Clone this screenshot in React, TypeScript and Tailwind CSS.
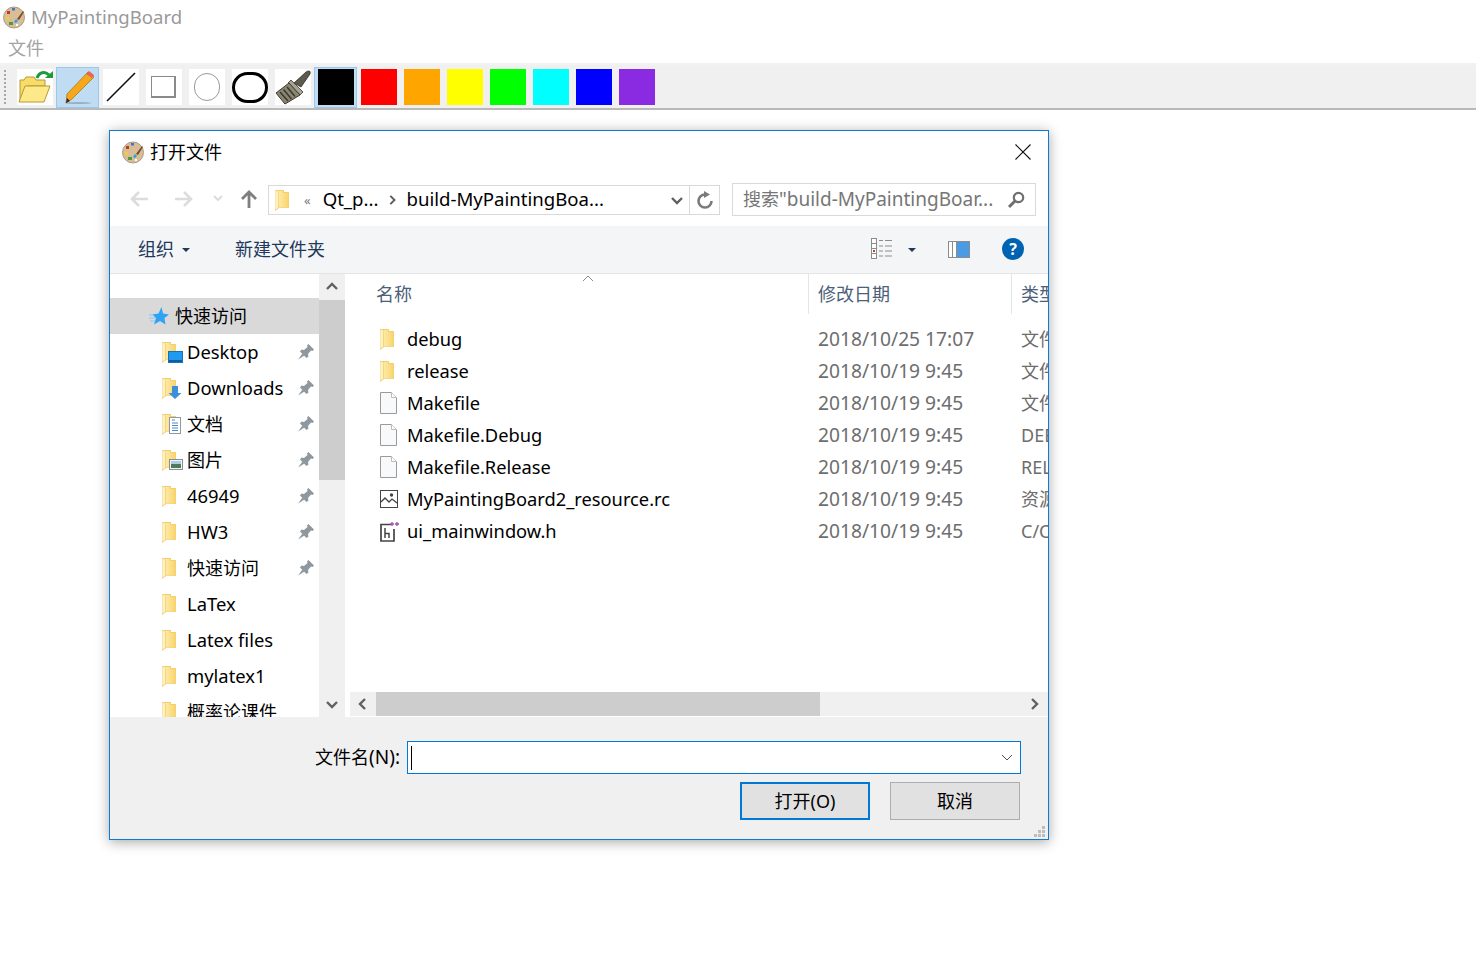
import React from 'react';

const sideItems = [
  { name: 'Desktop', badge: 'desktop', pin: true },
  { name: 'Downloads', badge: 'download', pin: true },
  { name: '文档', badge: 'doc', pin: true },
  { name: '图片', badge: 'pic', pin: true },
  { name: '46949', pin: true },
  { name: 'HW3', pin: true },
  { name: '快速访问', pin: true },
  { name: 'LaTex' },
  { name: 'Latex files' },
  { name: 'mylatex1' },
  { name: '概率论课件' },
];

const files = [
  { name: 'debug', date: '2018/10/25 17:07', type: '文件夹', icon: 'folder' },
  { name: 'release', date: '2018/10/19 9:45', type: '文件夹', icon: 'folder' },
  { name: 'Makefile', date: '2018/10/19 9:45', type: '文件', icon: 'file' },
  { name: 'Makefile.Debug', date: '2018/10/19 9:45', type: 'DEBUG', icon: 'file' },
  { name: 'Makefile.Release', date: '2018/10/19 9:45', type: 'RELEASE', icon: 'file' },
  { name: 'MyPaintingBoard2_resource.rc', date: '2018/10/19 9:45', type: '资源脚本', icon: 'image' },
  { name: 'ui_mainwindow.h', date: '2018/10/19 9:45', type: 'C/C++', icon: 'header' },
];

const colors = ['bg-[#ff0000]', 'bg-[#ffa500]', 'bg-[#ffff00]', 'bg-[#00ff00]', 'bg-[#00ffff]', 'bg-[#0000ff]', 'bg-[#8a2be2]'];

const hasCjk = (s: string) => /[\u4e00-\u9fff]/.test(s);

const Palette = () => (
  <svg width="22" height="24" viewBox="0 0 22 24" className="shrink-0">
    <ellipse cx="11" cy="12.5" rx="10.5" ry="10.5" fill="#d9bd96" stroke="#a89a88" strokeWidth="1" />
    <rect x="4" y="6" width="3" height="3" fill="#c0392b" />
    <rect x="9" y="3" width="3" height="2.5" fill="#4a6fd0" />
    <rect x="3" y="12" width="3" height="3" fill="#e6d33a" />
    <rect x="6" y="17" width="4" height="3" fill="#4f9a3c" />
    <path d="M11 17 L13 14 L15 16 L13 18 Z" fill="#2a9df4" />
    <path d="M14 14 L20 6 L21 7 L16 15 Z" fill="#7a4a2a" />
    <circle cx="14" cy="20" r="1.2" fill="#fff" />
  </svg>
);

const Folder = () => (
  <svg width="15" height="21" viewBox="0 0 15 21" className="shrink-0">
    <defs>
      <linearGradient id="folderBody" x1="0" y1="0" x2="1" y2="0">
        <stop offset="0" stopColor="#fff0b5" />
        <stop offset="1" stopColor="#f8d46f" />
      </linearGradient>
    </defs>
    <path d="M0 0 H9 V2 H14 V18 H4 L0 21 Z" fill="#f4cf72" />
    <path d="M1 1 H8 V3 H13.5 V17.5 H4 V3 L1 6 Z" fill="url(#folderBody)" />
    <path d="M0 0.5 V20 L3.5 18 V1 Z" fill="#fff1bd" stroke="#eccb75" strokeWidth="0.5" />
  </svg>
);

const Badge = ({ kind }: { kind?: string }) => {
  if (kind === 'desktop')
    return (
      <svg width="15" height="12" viewBox="0 0 15 12" className="absolute left-[6px] top-[9px]">
        <rect x="0.5" y="0.5" width="14" height="11" fill="#1e9bf0" stroke="#1a6fb5" />
        <rect x="1" y="9" width="13" height="2" fill="#0f5d9e" />
      </svg>
    );
  if (kind === 'download')
    return (
      <svg width="14" height="14" viewBox="0 0 14 14" className="absolute left-[6px] top-[8px]">
        <path d="M4 0 H10 V7 H13.5 L7 13 L0.5 7 H4 Z" fill="#3d8fdc" />
      </svg>
    );
  if (kind === 'doc')
    return (
      <svg width="12" height="17" viewBox="0 0 12 17" className="absolute left-[7px] top-[3px]">
        <rect x="0.5" y="0.5" width="11" height="16" fill="#fff" stroke="#8d99a6" />
        <path d="M3 3 H6 M3 6 H9 M3 8.5 H9 M3 11 H9 M3 13.5 H9" stroke="#4a86c8" strokeWidth="1" />
      </svg>
    );
  if (kind === 'pic')
    return (
      <svg width="14" height="11" viewBox="0 0 14 11" className="absolute left-[7px] top-[9px]">
        <rect x="0.5" y="0.5" width="13" height="10" fill="#f4f4f4" stroke="#8a8f94" />
        <rect x="2" y="2" width="10" height="3" fill="#a9cfe6" />
        <rect x="2" y="5" width="10" height="4" fill="#4e7a5c" />
      </svg>
    );
  return null;
};

const Pin = () => (
  <svg width="16" height="16" viewBox="0 0 16 16" className="shrink-0">
    <path d="M10.5 0 L16 5.5 L14.5 7 L13 6.5 L10 10 L10.5 12.5 L8.5 14 L2 7.5 L3.5 5.5 L6 6 L9.5 3 L9 1.5 Z" fill="#8f989f" />
    <path d="M4.5 9.5 L0 15.5 L6.5 11.5 Z" fill="#8f989f" />
  </svg>
);

const FileIcon = ({ kind }: { kind: string }) => {
  if (kind === 'folder') return <Folder />;
  if (kind === 'file')
    return (
      <svg width="17" height="22" viewBox="0 0 17 22" className="shrink-0">
        <path d="M0.5 0.5 H11.5 L16.5 5.5 V21.5 H0.5 Z" fill="#f8f9fa" stroke="#9a9a9a" />
        <path d="M11.5 0.5 V5.5 H16.5" fill="#fff" stroke="#bdbdbd" />
      </svg>
    );
  if (kind === 'image')
    return (
      <svg width="18" height="18" viewBox="0 0 18 18" className="shrink-0">
        <rect x="0.5" y="0.5" width="17" height="17" fill="#fff" stroke="#444" />
        <path d="M1 12 L5 8 L9 12 L12 9 L17 13" fill="none" stroke="#444" strokeWidth="1.3" />
        <circle cx="11.5" cy="5" r="1.7" fill="#444" />
      </svg>
    );
  return (
    <svg width="19" height="21" viewBox="0 0 19 21" className="shrink-0">
      <path d="M11 3.5 H1 V20 H14 V8" fill="#fff" stroke="#444" strokeWidth="1.7" />
      <path d="M5 7 V17 M5 12.5 H9 V17" fill="none" stroke="#444" strokeWidth="1.5" />
      <path d="M10 3 H14 M12 1 V5 M15 3 H19 M17 1 V5" stroke="#a24fa8" strokeWidth="1.3" />
    </svg>
  );
};

const Chevron = ({ dir, className }: { dir: 'up' | 'down' | 'left' | 'right'; className?: string }) => {
  const d = { up: 'M1 8 L6 3 L11 8', down: 'M1 4 L6 9 L11 4', left: 'M8 1 L3 6 L8 11', right: 'M4 1 L9 6 L4 11' }[dir];
  return (
    <svg width="12" height="12" viewBox="0 0 12 12" className={className}>
      <path d={d} fill="none" stroke="#606060" strokeWidth="2.4" />
    </svg>
  );
};

const ToolButton = ({ active, children }: { active?: boolean; children: React.ReactNode }) => (
  <div
    className={
      active
        ? 'w-[43px] h-[41px] flex items-center justify-center bg-[#bfdcf3] border border-[#99c9ef]'
        : 'w-[43px] h-[41px] flex items-center justify-center'
    }
  >
    <div className="w-[36px] h-[36px] flex items-center justify-center">{children}</div>
  </div>
);

const App: React.FC = () => {
  return (
    <div className="relative w-full h-screen overflow-hidden bg-white font-['Noto_Sans','Noto_Sans_CJK_SC',sans-serif]">
      {/* Main window */}
      <div className="h-[34px] flex items-center pl-[3px] gap-[6px]">
        <Palette />
        <span className="text-[18.6px] text-[#9a9a9a]">MyPaintingBoard</span>
      </div>
      <div className="h-[31px] flex items-center pl-[8px] text-[18px] text-[#a3a3a3] border-b-2 border-[#f2f2f2]">文件</div>
      <div className="h-[45px] flex items-center bg-[#f0f0f0] border-b-2 border-[#b9b9b9] pl-[4px] pt-px">
        <div className="w-[3px] h-[34px] mr-[6px] border-l-2 border-dotted border-[#a8a8a8]" />
        <ToolButton>
          <div className="w-[36px] h-[36px] bg-white">
            <svg width="36" height="36" viewBox="0 0 36 36">
              <path d="M3 31 V11 H7 L9 8 H17 L19 11 H28 V17 H10 Z" fill="#f7dc6a" stroke="#b79a35" />
              <path d="M2 33 L8 17 H33 L27 33 Z" fill="#fde98a" stroke="#b79a35" />
              <path d="M20 9 C22 3 28 2 32 6" fill="none" stroke="#1f9a3a" strokeWidth="3" />
              <path d="M28 9 H36 V2 Z" fill="#1f9a3a" />
            </svg>
          </div>
        </ToolButton>
        <ToolButton active>
          <svg width="36" height="36" viewBox="0 0 36 36">
            <ellipse cx="18" cy="34" rx="13" ry="1" fill="#9cb0c0" />
            <path d="M28 3 L34 8 L12 30 L6 34 L7 25 Z" fill="#f6a81c" stroke="#a86c0b" strokeWidth="0.7" />
            <path d="M29 2 L34 6 L32 9 L26 5 Z" fill="#e2655a" />
            <path d="M7 29 L10 32 L6 34 Z" fill="#2b2b2b" />
          </svg>
        </ToolButton>
        <ToolButton>
          <div className="w-[36px] h-[36px] bg-white">
            <svg width="36" height="36" viewBox="0 0 36 36">
              <path d="M4 32 L32 4" stroke="#111" strokeWidth="1.6" />
            </svg>
          </div>
        </ToolButton>
        <ToolButton>
          <div className="w-[36px] h-[36px] bg-white flex items-center justify-center">
            <div className="w-[25px] h-[22px] border border-[#8a8a8a] border-b-2 border-r-2" />
          </div>
        </ToolButton>
        <ToolButton>
          <div className="w-[36px] h-[36px] bg-white flex items-center justify-center">
            <div className="w-[26px] h-[28px] rounded-full border border-[#9a9a9a]" />
          </div>
        </ToolButton>
        <ToolButton>
          <div className="w-[36px] h-[36px] bg-white flex items-center justify-center">
            <div className="w-[36px] h-[31px] rounded-full border-[3px] border-black" />
          </div>
        </ToolButton>
        <ToolButton>
          <div className="w-[36px] h-[36px] bg-white">
            <svg width="36" height="36" viewBox="0 0 36 36">
              <path d="M19 14 L31 3 Q36 0 35 5 L26 18 Z" fill="#5c5a4c" stroke="#2c2b25" strokeWidth="0.8" />
              <path d="M16 11 L28 23 L25 26 L13 14 Z" fill="#a7a48f" stroke="#3a382f" strokeWidth="0.8" />
              <path d="M14 14 L25 26 L10 35 L1 24 Z" fill="#8b8672" stroke="#3a382f" />
              <path d="M5 23 L13 32 M8.5 20.5 L16.5 30 M12 18 L20 27.5" stroke="#3a382f" strokeWidth="1.5" />
            </svg>
          </div>
        </ToolButton>
        <ToolButton active>
          <div className="w-[36px] h-[36px] bg-black" />
        </ToolButton>
        {colors.map((c) => (
          <ToolButton key={c}>
            <div className={`w-[36px] h-[36px] ${c}`} />
          </ToolButton>
        ))}
      </div>

      {/* Open file dialog */}
      <div className="absolute left-[109px] top-[130px] w-[940px] h-[710px] flex flex-col bg-white border border-[#0a7bd6] shadow-[0_2px_12px_rgba(0,0,0,0.35)]">
        <div className="h-[42px] shrink-0 flex items-center pl-[12px] pr-[17px] gap-[6px]">
          <Palette />
          <span className="text-[18px] text-black">打开文件</span>
          <svg width="16" height="16" viewBox="0 0 16 16" className="ml-auto">
            <path d="M0.5 0.5 L15.5 15.5 M15.5 0.5 L0.5 15.5" stroke="#111" strokeWidth="1.1" />
          </svg>
        </div>

        {/* Navigation row */}
        <div className="h-[53px] shrink-0 flex items-start">
          <div className="w-[158px] h-[52px] shrink-0 flex items-center">
            <svg width="20" height="18" viewBox="0 0 20 18" className="ml-[19px]">
              <path d="M19 9 H3 M10 2 L3 9 L10 16" fill="none" stroke="#dcdcdc" strokeWidth="2.6" />
            </svg>
            <svg width="20" height="18" viewBox="0 0 20 18" className="ml-[25px]">
              <path d="M1 9 H17 M10 2 L17 9 L10 16" fill="none" stroke="#dcdcdc" strokeWidth="2.6" />
            </svg>
            <svg width="10" height="8" viewBox="0 0 10 8" className="ml-[19px]">
              <path d="M1 1 L5 5 L9 1" fill="none" stroke="#dcdcdc" strokeWidth="2" />
            </svg>
            <svg width="18" height="20" viewBox="0 0 18 20" className="ml-[17px]">
              <path d="M9 19 V3 M2 10 L9 3 L16 10" fill="none" stroke="#7f7f7f" strokeWidth="2.8" />
            </svg>
          </div>
          <div className="w-[452px] h-[30px] mt-[12px] shrink-0 flex items-center border border-[#d9d9d9]">
            <div className="ml-[6px] w-[15px] h-[21px] shrink-0"><Folder /></div>
            <span className="ml-[14px] text-[#777] text-[13px] leading-none">«</span>
            <span className="ml-[12px] mb-[2px] text-[18.6px] text-black whitespace-nowrap">Qt_p...</span>
            <Chevron dir="right" className="ml-[8px] w-[10px] h-[10px]" />
            <span className="ml-[10px] mb-[2px] text-[18.6px] text-black whitespace-nowrap">build-MyPaintingBoa...</span>
            <Chevron dir="down" className="ml-auto mr-[6px]" />
            <div className="w-[30px] h-full flex items-center justify-center border-l border-[#d9d9d9]">
              <svg width="18" height="18" viewBox="0 0 18 18">
                <path d="M9 3.5 A6.5 6.5 0 1 0 15.5 10" fill="none" stroke="#7a7a7a" strokeWidth="2.6" />
                <path d="M8 0 L14 3.5 L8 7 Z" fill="#7a7a7a" />
              </svg>
            </div>
          </div>
          <div className="w-[304px] h-[33px] mt-[10px] ml-[12px] shrink-0 flex items-center border border-[#d9d9d9] pl-[10px] pr-[10px]">
            <span className="text-[18px] text-[#767676] whitespace-nowrap">搜索<span className="text-[19px]">"build-MyPaintingBoar...</span></span>
            <svg width="18" height="18" viewBox="0 0 18 18" className="ml-auto">
              <circle cx="11.5" cy="6.5" r="4.7" fill="none" stroke="#6f6f6f" strokeWidth="2.2" />
              <path d="M8 10 L2 16" stroke="#6f6f6f" strokeWidth="3" />
            </svg>
          </div>
        </div>

        {/* Command bar */}
        <div className="h-[48px] shrink-0 flex items-center bg-[#f4f5f7] border-b border-[#e5e5e5] text-[18px] text-[#1e395b] pl-[28px] pr-[24px]">
          <span>组织</span>
          <div className="ml-[8px] w-0 h-0 border-x-[4px] border-x-transparent border-t-[4px] border-t-[#1e395b]" />
          <span className="ml-[45px]">新建文件夹</span>
          <svg width="22" height="22" viewBox="0 0 22 22" className="ml-auto -mt-[2px]">
            <g fill="#fff" stroke="#8c8c8c">
              <rect x="0.5" y="0.5" width="5" height="5" />
              <rect x="0.5" y="5.5" width="5" height="5" />
              <rect x="0.5" y="10.5" width="5" height="5" />
              <rect x="0.5" y="15.5" width="5" height="5" />
            </g>
            <rect x="2" y="12" width="2" height="2" fill="#b8442a" />
            <path d="M8 2.5 H12 M14 2.5 H21 M8 8 H12 M14 8 H21 M8 13 H12 M14 13 H21 M8 18 H12 M14 18 H21" stroke="#8c8c8c" />
          </svg>
          <div className="ml-[15px] w-0 h-0 border-x-[4px] border-x-transparent border-t-[4px] border-t-[#1e395b]" />
          <div className="ml-[32px] w-[22px] h-[17px] flex border border-[#8c8c8c] bg-white">
            <div className="w-[4px] border-r border-[#8c8c8c]" />
            <div className="w-[4px] border-r border-[#8c8c8c]" />
            <div className="flex-1 bg-[#4a9be6]" />
          </div>
          <div className="ml-[32px] -mt-[2px] w-[22px] h-[22px] rounded-full bg-[#0063b1] flex items-center justify-center text-white text-[16px] font-bold leading-none">?</div>
        </div>

        {/* Body */}
        <div className="flex-1 min-h-0 flex overflow-hidden">
          <div className="w-[209px] shrink-0 pt-[24px] overflow-hidden">
            <div className="h-[36px] flex items-center bg-[#d9d9d9] pl-[39px]">
              <svg width="20" height="18" viewBox="0 0 20 18" className="shrink-0">
                <path d="M12.5 0 L14 6.5 L20 7.5 L15.5 11 L16.5 17.5 L11 14 L5 17.5 L7 11 L3.5 7.5 L9.5 6.5 Z" fill="#2ea4f4" />
                <path d="M0 8 H4 M0 11 H6 M1 14 H6" stroke="#8cc7f0" />
              </svg>
              <span className="ml-[6px] text-[18px] text-black">快速访问</span>
            </div>
            {sideItems.map((item) => (
              <div key={item.name} className="h-[36px] flex items-center pl-[52px] pr-[5px]">
                <div className="relative w-[15px] h-[21px] shrink-0">
                  <Folder />
                  <Badge kind={item.badge} />
                </div>
                <span className={hasCjk(item.name) ? 'ml-[10px] text-[18px] text-black whitespace-nowrap' : 'ml-[10px] text-[18.4px] text-black whitespace-nowrap'}>{item.name}</span>
                {item.pin && <div className="ml-auto"><Pin /></div>}
              </div>
            ))}
          </div>
          <div className="w-[26px] shrink-0 bg-[#f0f0f0] flex flex-col">
            <div className="h-[26px] flex items-center justify-center"><Chevron dir="up" /></div>
            <div className="h-[180px] bg-[#cdcdcd]" />
            <div className="flex-1" />
            <div className="h-[26px] flex items-center justify-center"><Chevron dir="down" /></div>
          </div>
          <div className="flex-1 min-w-0 flex flex-col ml-[5px] pb-px">
            <div className="flex-1 min-h-0 overflow-hidden">
              <div className="relative h-[40px] flex text-[18px] text-[#4c607a]">
                <div className="w-[459px] shrink-0 pl-[26px] flex items-center border-r border-[#e5e5e5]">名称</div>
                <div className="w-[203px] shrink-0 pl-[9px] flex items-center border-r border-[#e5e5e5]">修改日期</div>
                <div className="pl-[9px] shrink-0 flex items-center whitespace-nowrap">类型</div>
                <svg width="12" height="7" viewBox="0 0 12 7" className="absolute left-[232px] top-px">
                  <path d="M1 6 L6 1 L11 6" fill="none" stroke="#8a8a8a" />
                </svg>
              </div>
              <div className="pt-[9px]">
                {files.map((f) => (
                  <div key={f.name} className="h-[32px] flex items-center whitespace-nowrap">
                    <div className="w-[57px] pl-[30px] shrink-0 flex items-center"><FileIcon kind={f.icon} /></div>
                    <div className="w-[411px] shrink-0 text-[18.3px] text-black">{f.name}</div>
                    <div className="w-[203px] shrink-0 text-[19.2px] text-[#6d6d6d]">{f.date}</div>
                    <div className="shrink-0 text-[18px] text-[#6d6d6d]">{f.type}</div>
                  </div>
                ))}
              </div>
            </div>
            <div className="h-[24px] shrink-0 flex items-center bg-[#f0f0f0]">
              <div className="w-[26px] flex justify-center"><Chevron dir="left" /></div>
              <div className="w-[444px] h-full bg-[#cdcdcd]" />
              <div className="ml-auto w-[28px] flex justify-center"><Chevron dir="right" /></div>
            </div>
          </div>
        </div>

        {/* Footer */}
        <div className="h-[122px] shrink-0 relative bg-[#f0f0f0] flex flex-col pt-[24px] pr-[27px] items-end">
          <div className="flex items-center">
            <span className="text-[18px] text-black mr-[7px]">文件名<span className="text-[19px]">(N):</span></span>
            <div className="w-[614px] h-[33px] bg-white border border-[#0078d7] flex items-center pl-[3px] pr-[7px]">
              <div className="w-px h-[24px] bg-black" />
              <svg width="12" height="8" viewBox="0 0 12 8" className="ml-auto">
                <path d="M1 1 L6 6 L11 1" fill="none" stroke="#555" />
              </svg>
            </div>
          </div>
          <div className="flex items-center gap-[20px] mt-[8px] mr-px">
            <div className="w-[130px] h-[38px] bg-[#e1e1e1] border-2 border-[#0078d7] flex items-center justify-center text-[18px] text-black">打开(O)</div>
            <div className="w-[130px] h-[38px] bg-[#e1e1e1] border border-[#adadad] flex items-center justify-center text-[18px] text-black">取消</div>
          </div>
          <svg width="12" height="12" viewBox="0 0 12 12" className="absolute right-[2px] bottom-px">
            <path d="M8 0 h3 v3 h-3 Z M4 4 h3 v3 h-3 Z M8 4 h3 v3 h-3 Z M0 8 h3 v3 h-3 Z M4 8 h3 v3 h-3 Z M8 8 h3 v3 h-3 Z" fill="#bdbdbd" />
          </svg>
        </div>
      </div>
    </div>
  );
};

export default App;
